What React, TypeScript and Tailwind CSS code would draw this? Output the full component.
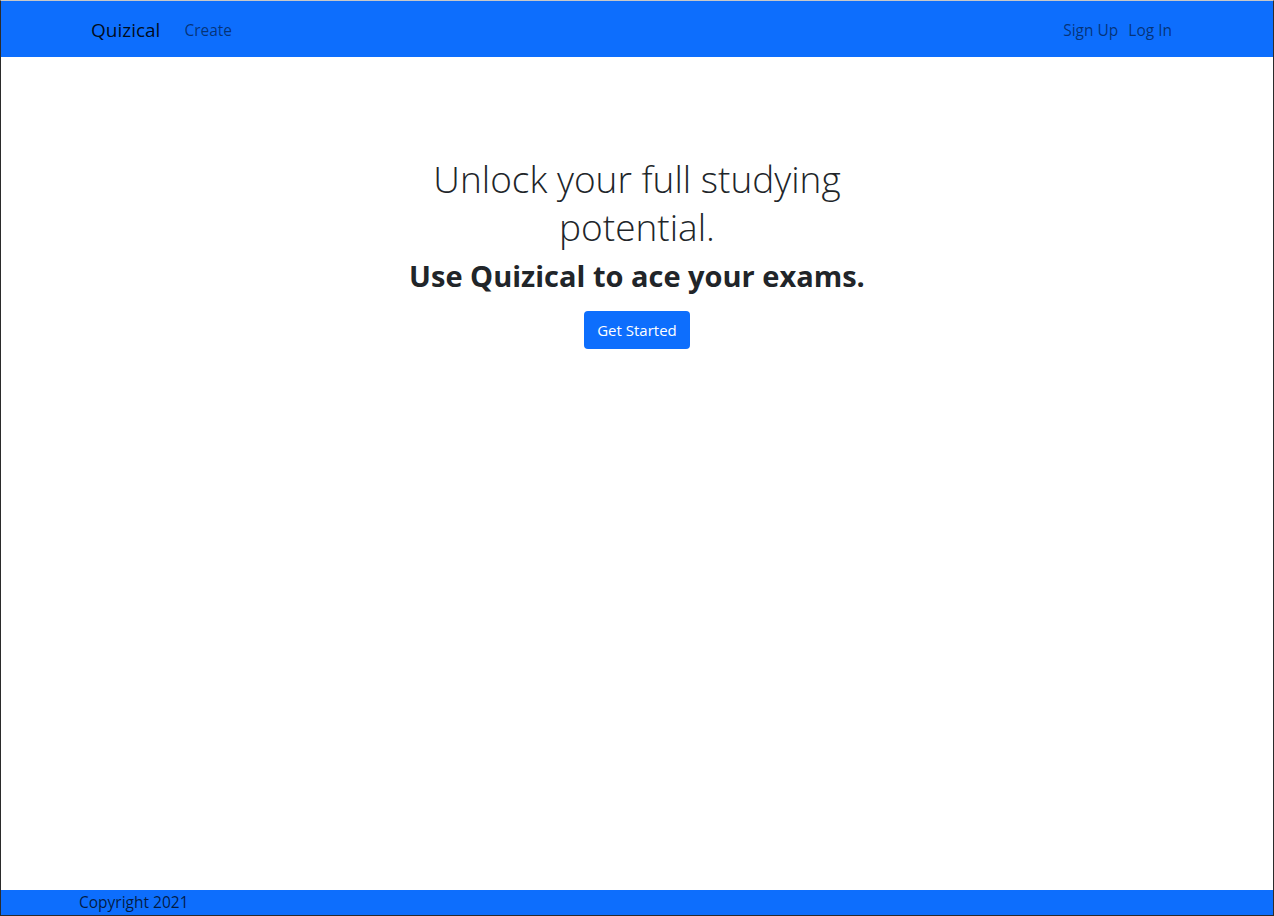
export default function App() {
  return (
    <div
      className="flex h-[916px] flex-col border-x border-b border-t border-x-[#2b2b2b] border-b-[#2b2b2b] border-t-[#c8c8c8] bg-white text-[#212529]"
      style={{ fontFamily: '"Open Sans", "Noto Sans", sans-serif' }}
    >
      <nav className="flex h-[56px] shrink-0 items-center bg-[#0d6efd] pt-[3px] pl-[90px] pr-[101px]">
        <a className="mr-[24px] text-[19px] text-black/90">Quizical</a>
        <a className="text-[15.5px] text-black/55">Create</a>
        <div className="ml-auto flex gap-[10px] text-[15.5px] text-black/55">
          <a>Sign Up</a>
          <a>Log In</a>
        </div>
      </nav>

      <main className="flex flex-1 flex-col items-center pt-[98px]">
        <h1 className="max-w-[440px] text-center text-[37px] leading-[48px] font-light">
          Unlock your full studying potential.
        </h1>
        <h2 className="mt-[3px] text-[29px] leading-[44px] font-bold">
          Use Quizical to ace your exams.
        </h2>
        <button className="mt-[13px] h-[38px] rounded-[4px] bg-[#0d6efd] px-[13px] text-[15px] text-white">
          Get Started
        </button>
      </main>

      <footer className="flex h-[25px] shrink-0 items-center bg-[#0d6efd] pl-[78px] pt-[1px] text-[15.5px] text-black/75">
        Copyright 2021
      </footer>
    </div>
  );
}
